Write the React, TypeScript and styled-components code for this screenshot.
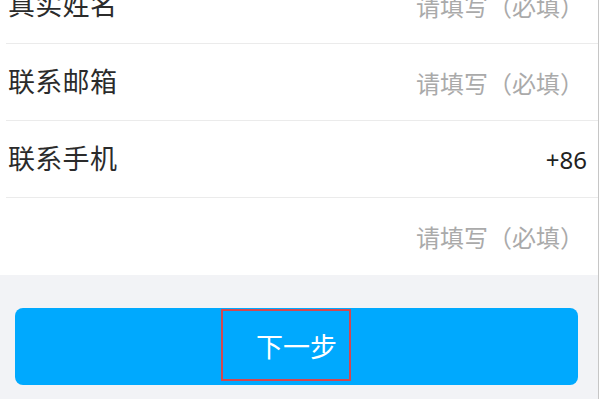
import React from "react";
import styled, { createGlobalStyle } from "styled-components";

const Global = createGlobalStyle`
  html, body { margin: 0; padding: 0; background: #ffffff; }
  * { box-sizing: border-box; }
`;

const Page = styled.div`
  width: 599px;
  height: 399px;
  overflow: hidden;
  background: #f2f3f6;
  border-right: 1px solid #c6c6c6;
  font-family: "Noto Sans", "Noto Sans CJK SC", sans-serif;
`;

const List = styled.div`
  background: #ffffff;
  margin-top: -33px;
`;

const Row = styled.div<{ $last?: boolean }>`
  height: 77px;
  margin-left: 6px;
  padding-left: 2px;
  display: flex;
  align-items: center;
  justify-content: space-between;
  border-bottom: ${(p) => (p.$last ? "none" : "1px solid #ebebeb")};
`;

const Label = styled.span`
  font-size: 27px;
  color: #2b2b2b;
  font-family: "Noto Sans CJK SC", sans-serif;
  letter-spacing: 0.3px;
  margin-top: -3px;
`;

const Placeholder = styled.span`
  font-size: 24px;
  color: #aaaaaa;
  font-family: "Noto Sans CJK SC", sans-serif;
  padding-right: 14px;
`;

const Value = styled.span`
  font-size: 24px;
  color: #222222;
  font-family: "Noto Sans", sans-serif;
  padding-right: 11px;
`;

const Footer = styled.div`
  padding: 33px 20px 0 15px;
`;

const Button = styled.button`
  position: relative;
  width: 100%;
  height: 77px;
  border: none;
  border-radius: 8px;
  background: #00a9fe;
  color: #ffffff;
  font-size: 27px;
  font-family: "Noto Sans CJK SC", sans-serif;
  display: flex;
  align-items: center;
  justify-content: center;
  padding: 0 0 2px 0;
`;

const Highlight = styled.span`
  position: absolute;
  left: 206px;
  top: 1px;
  width: 130px;
  height: 72px;
  border: 2px solid #d4474f;
`;

const rows = [
  { label: "真实姓名", placeholder: "请填写（必填）" },
  { label: "联系邮箱", placeholder: "请填写（必填）" },
  { label: "联系手机", value: "+86" },
  { label: "", placeholder: "请填写（必填）" },
];

export default function App() {
  return (
    <>
      <Global />
      <Page>
        <List>
          {rows.map((r, i) => (
            <Row key={i} $last={i === rows.length - 1}>
              <Label>{r.label}</Label>
              {r.value ? <Value>{r.value}</Value> : <Placeholder>{r.placeholder}</Placeholder>}
            </Row>
          ))}
        </List>
        <Footer>
          <Button>
            下一步
            <Highlight />
          </Button>
        </Footer>
      </Page>
    </>
  );
}
